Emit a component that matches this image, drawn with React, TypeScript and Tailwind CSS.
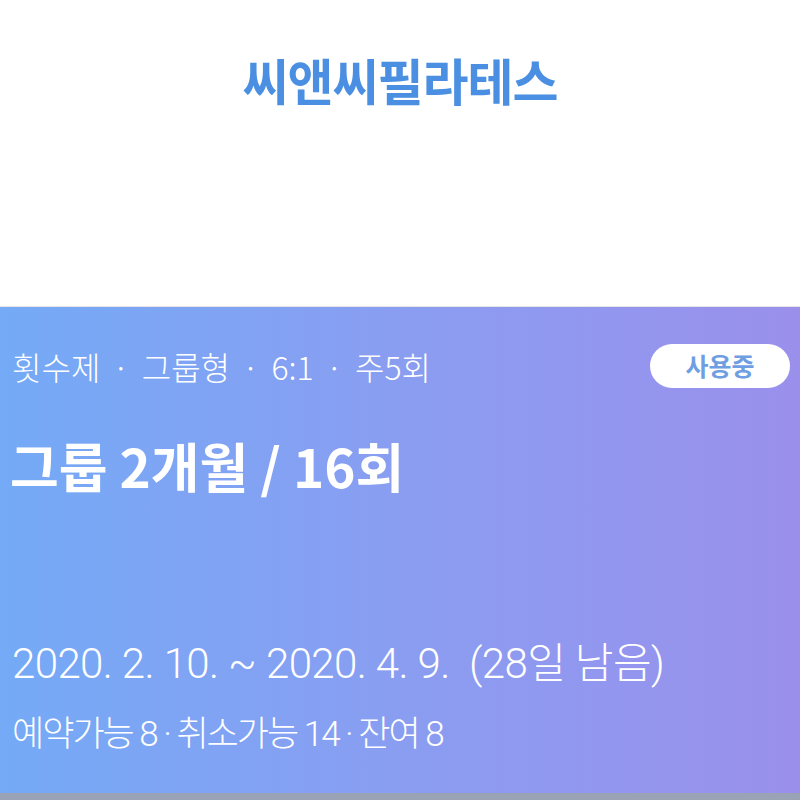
const Dot = () => <span className="px-[12px]">·</span>;

export default function App() {
  return (
    <div className="w-[800px] h-[800px] flex flex-col bg-[#9aa3b5] overflow-hidden" style={{ fontFamily: '"Noto Sans CJK KR", "Noto Sans", sans-serif' }}>
      <div className="h-[307px] bg-white flex justify-center pt-[49px] border-b border-[#e6e6ea]">
        <h1 className="text-[50px] font-bold text-[#4a8fe2] leading-none tracking-[-1px] h-[60px] flex items-center">
          씨앤씨필라테스
        </h1>
      </div>
      <div className="h-[486px] bg-gradient-to-r from-[#74aaf6] to-[#9a90ec] text-white px-3 flex flex-col">
        <div className="flex items-center justify-between pt-[37px]">
          <div className="text-[32px] font-light leading-none h-[44px] flex items-center">
            <span>횟수제</span>
            <Dot />
            <span>그룹형</span>
            <Dot />
            <span>6:1</span>
            <Dot />
            <span>주5회</span>
          </div>
          <div className="w-[140px] h-[44px] bg-white rounded-full flex items-center justify-center text-[25px] font-bold text-[#6f9ee2] mr-[-2px]">
            사용중
          </div>
        </div>
        <div className="mt-[51px] text-[53px] font-bold leading-none -ml-[2px]">
          그룹 2개월 / 16회
        </div>
        <div className="mt-auto text-[42px] font-light leading-none tracking-[-0.6px]" style={{ fontFamily: 'Roboto, "Noto Sans CJK KR", sans-serif' }}>
          2020. 2. 10. ~ 2020. 4. 9.&nbsp;&nbsp;(28일 남음)
        </div>
        <div className="mt-[32px] mb-[41px] text-[35px] font-light leading-none tracking-[-2px]" style={{ fontFamily: 'Roboto, "Noto Sans CJK KR", sans-serif' }}>
          예약가능 8 · 취소가능 14 · 잔여 8
        </div>
      </div>
    </div>
  );
}
